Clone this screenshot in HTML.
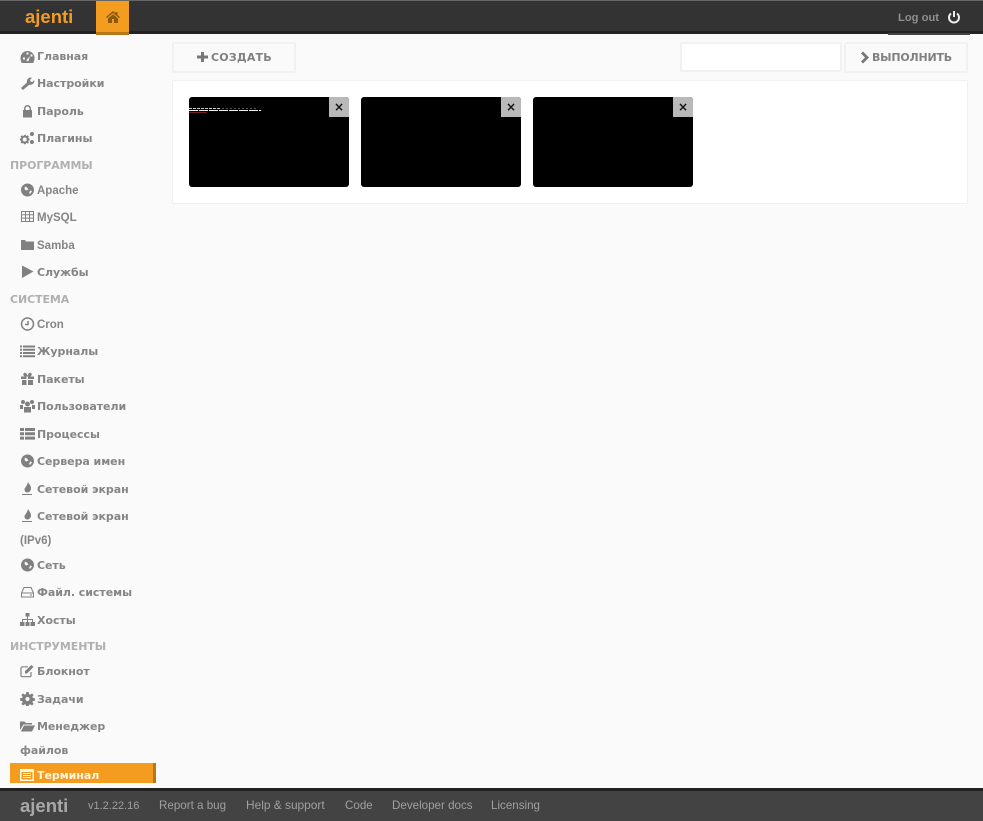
<!DOCTYPE html>
<html><head><meta charset="utf-8">
<style>
html,body{margin:0;padding:0;width:983px;height:821px;overflow:hidden;background:#fafafa;font-family:"DejaVu Sans",sans-serif}
.a{position:absolute;white-space:nowrap}
.t{position:absolute;left:37px;margin-top:1px;white-space:nowrap;font:bold 11px/14px "DejaVu Sans",sans-serif;color:#858585;letter-spacing:-.05px}
.l{position:absolute;left:37px;margin-top:1px;white-space:nowrap;font:bold 11.5px/14px "Liberation Sans",sans-serif;color:#858585}
.h{position:absolute;left:10px;margin-top:1px;white-space:nowrap;font:bold 11px/14px "DejaVu Sans",sans-serif;color:#b0b0b0;letter-spacing:-.1px}
svg.i{position:absolute;left:20px;width:15px;height:14px;fill:#808080}
.f{position:absolute;top:799px;white-space:nowrap;font:11.6px/14px "Liberation Sans",sans-serif;color:#a0a0a0}
.btn{position:absolute;background:#fafafa;border:2px solid #f1f1f1;box-sizing:border-box;border-radius:2px}
.term{position:absolute;top:97px;width:160px;height:90px;background:#000;border-radius:3px;overflow:hidden}
.x{position:absolute;right:0;top:0;width:20px;height:20px;background:#b9b9b9;color:#111;font:bold 12px/20px "DejaVu Sans",sans-serif;text-align:center}
</style></head><body>
<div class="a" style="left:0;top:0;width:983px;height:34px;background:#333;border-top:1px solid #666;border-bottom:3px solid #222;box-sizing:border-box"></div>
<div class="a" style="left:25px;top:6px;font:bold 18.5px/22px 'Liberation Sans',sans-serif;color:#f39c1f">ajenti</div>
<div class="a" style="left:96px;top:1px;width:33px;height:34px;background:#f39c1f;border-bottom:3px solid #b97716;box-sizing:border-box"></div>
<svg class="a" style="left:106px;top:11px" width="14" height="12" viewBox="0 0 14 12"><path fill="#8a5a10" d="M7 0 0 6l1 1 6-5 6 5 1-1-2.500-2V1h-2v1.300zM2 7.500V12h4V8h2v4h4V7.500L7 3.300z"/></svg>
<div class="a" style="left:888px;top:33px;width:82px;height:2px;background:#444"></div>
<div class="a" style="left:898px;top:11px;font:bold 11.2px/14px 'Liberation Sans',sans-serif;color:#8f8f8f">Log out</div>
<svg class="a" style="left:947px;top:10px" width="14" height="15" viewBox="0 0 14 15"><path fill="none" stroke="#eee" stroke-width="2" d="M4 3.500a5 5 0 1 0 6 0M7 1v6"/></svg>

<svg class="i" style="top:50px" viewBox="0 0 15 14"><path fill-rule="evenodd" d="M7.500 1a7 7 0 0 0-7 7c0 1.800.5 3.500 1.300 5h11.400c.8-1.500 1.300-3.200 1.300-5a7 7 0 0 0-7-7zM3 7.500h2v2H3zm3.500-5h2v2h-2zm4 2v2h2v-2zM6.500 10a1.200 1.200 0 0 0 2 1L10 6z"/></svg>
<div class="t" style="top:49px">Главная</div>
<svg class="i" style="top:76px" viewBox="0 0 15 14"><path d="M1 12 7 6.500C6.500 4 8 1.500 11 1.500l1 .2-2 2 .5 1.800 1.800.5 2-2c.4 3-2 5.300-5 4.700L3 14z"/></svg>
<div class="t" style="top:76px">Настройки</div>
<svg class="i" style="top:104px" viewBox="0 0 15 14"><path d="M3 6h1V4.500a3.500 3.500 0 0 1 7 0V6h1v7.500H3zm2.500 0h4V4.500a2 2 0 0 0-4 0z"/></svg>
<div class="t" style="top:104px">Пароль</div>
<svg class="i" style="top:131px" viewBox="0 0 15 14"><path d="M5.500 3.500 6.200 5l1.600-.6 1 1-.6 1.600 1.300.7v1.500L8.200 9.900l.6 1.600-1 1-1.600-.6-.7 1.300H4L3.300 11.900l-1.600.6-1-1 .6-1.600L0 9.200V7.700L1.300 7 .7 5.400l1-1 1.600.6L5 3.500z M4.700 6.500a2 2 0 1 0 .1 4 2 2 0 0 0-.1-4zM12 1a2 2 0 1 1-.1 4A2 2 0 0 1 12 1zm0 8a2 2 0 1 1-.1 4 2 2 0 0 1 .1-4z" fill-rule="evenodd"/></svg>
<div class="t" style="top:131px">Плагины</div>

<div class="h" style="top:158px">ПРОГРАММЫ</div>
<svg class="i" style="top:183px" viewBox="0 0 15 14"><path d="M7.500.5a6.500 6.500 0 1 0 0 13 6.500 6.500 0 0 0 0-13zM5 3.500l2 1 1.500 2-2.500 1-1.500-1.500zm5 4 2 .5-1.500 2.500-1.500 0z" fill-rule="evenodd"/></svg>
<div class="l" style="top:183px">Apache</div>
<svg class="i" style="top:210px" viewBox="0 0 15 14"><path fill="none" stroke="#808080" d="M1.500 1.500h12v10h-12zM1.500 4.800h12M1.500 8.100h12M5.500 1.500v10M9.500 1.500v10"/></svg>
<div class="l" style="top:210px">MySQL</div>
<svg class="i" style="top:238px" viewBox="0 0 15 14"><path d="M1 2h4l1 1.500h8V12H1z"/></svg>
<div class="l" style="top:238px">Samba</div>
<svg class="i" style="top:265px" viewBox="0 0 15 14"><path d="M2 0.500 13.500 6.500 2 13z"/></svg>
<div class="t" style="top:265px">Службы</div>

<div class="h" style="top:292px">СИСТЕМА</div>
<svg class="i" style="top:317px" viewBox="0 0 15 14"><path fill="none" stroke="#808080" stroke-width="1.500" d="M7.500 1a6 6 0 1 0 0 12 6 6 0 0 0 0-12zM8 4v3.500H5"/></svg>
<div class="l" style="top:317px">Cron</div>
<svg class="i" style="top:344px" viewBox="0 0 15 14"><path d="M0 1.500h2v2H0zm3 0h12v2H3zM0 4.800h2v2H0zm3 0h12v2H3zM0 8h2v2H0zm3 0h12v2H3zM0 11.200h2v2H0zm3 0h12v2H3z"/></svg>
<div class="t" style="top:344px">Журналы</div>
<svg class="i" style="top:372px" viewBox="0 0 15 14"><path d="M1 4.500h5.500V7H1zm7 0h6V7H8zM2 8h4.500v5H2zm6 0h5v5H8zM4 1c1.500-.8 3 .5 3.500 3 .5-2.500 2-3.800 3.500-3 1.500 1 .5 3-1 3.500H5C3.500 4 2.500 2 4 1z"/></svg>
<div class="t" style="top:372px">Пакеты</div>
<svg class="i" style="top:399px" viewBox="0 0 15 14"><path d="M3 1a2 2 0 1 1 0 4 2 2 0 0 1 0-4zm9 0a2 2 0 1 1 0 4 2 2 0 0 1 0-4zM7.500 2.500a2.500 2.500 0 1 1 0 5 2.500 2.500 0 0 1 0-5zM0 6h3v4H0zm12 0h3v4h-3zM4 8h7v5.500H4z"/></svg>
<div class="t" style="top:399px">Пользователи</div>
<svg class="i" style="top:427px" viewBox="0 0 15 14"><path d="M0 1h4v3H0zm5 0h10v3H5zM0 5.300h4v3H0zm5 0h10v3H5zM0 9.600h4v3H0zm5 0h10v3H5z"/></svg>
<div class="t" style="top:427px">Процессы</div>
<svg class="i" style="top:454px" viewBox="0 0 15 14"><path d="M7.500.5a6.500 6.500 0 1 0 0 13 6.500 6.500 0 0 0 0-13zM5 3.500l2 1 1.500 2-2.500 1-1.500-1.500zm5 4 2 .5-1.500 2.500-1.500 0z" fill-rule="evenodd"/></svg>
<div class="t" style="top:454px">Сервера имен</div>
<svg class="i" style="top:482px" viewBox="0 0 15 14"><path d="M8 0c1 2 3 3.500 3 6.500 0 2.500-2 4-3.500 4-2 0-3-1.500-3-3 0-2 2-2 3.500-7.500zM2 12h10v1H2z"/></svg>
<div class="t" style="top:482px">Сетевой экран</div>
<svg class="i" style="top:509px" viewBox="0 0 15 14"><path d="M8 0c1 2 3 3.500 3 6.500 0 2.500-2 4-3.500 4-2 0-3-1.500-3-3 0-2 2-2 3.500-7.500zM2 12h10v1H2z"/></svg>
<div class="t" style="top:509px">Сетевой экран</div>
<div class="l" style="top:533px;left:20px;font-size:11.5px">(IPv6)</div>
<svg class="i" style="top:558px" viewBox="0 0 15 14"><path d="M7.500.5a6.500 6.500 0 1 0 0 13 6.500 6.500 0 0 0 0-13zM5 3.500l2 1 1.500 2-2.500 1-1.500-1.500zm5 4 2 .5-1.500 2.500-1.500 0z" fill-rule="evenodd"/></svg>
<div class="t" style="top:558px">Сеть</div>
<svg class="i" style="top:585px" viewBox="0 0 15 14"><path fill="none" stroke="#808080" d="M1.500 8 4 2.500h7L13.500 8v4h-12zM1.500 8h12M10 10h2"/></svg>
<div class="t" style="top:585px">Файл. системы</div>
<svg class="i" style="top:613px" viewBox="0 0 15 14"><path d="M5.500 0h4v3.500h-4zM7 3.500h1V6h5v3h-1V7H8v2H7V7H3v2H2V6h5zM0 9h4.500v4H0zm5.500 0h4v4h-4zm5 0H15v4h-4.500z"/></svg>
<div class="t" style="top:613px">Хосты</div>

<div class="h" style="top:639px">ИНСТРУМЕНТЫ</div>
<svg class="i" style="top:664px" viewBox="0 0 15 14"><path fill="none" stroke="#808080" stroke-width="1.200" d="M11 8v3.500a1.200 1.200 0 0 1-1.200 1.200H2.200A1.200 1.200 0 0 1 1 11.500V4a1.200 1.200 0 0 1 1.200-1.200H8"/><path d="M5 7 11.500 1l2 2L7 9.500H5z"/></svg>
<div class="t" style="top:664px">Блокнот</div>
<svg class="i" style="top:692px" viewBox="0 0 15 14"><path fill-rule="evenodd" d="M6.300 0h2.400l.3 2 1.300.6 1.700-1.200 1.600 1.700L12.400 4.800l.5 1.200 2 .3v2.400l-2 .3-.5 1.200 1.200 1.700-1.600 1.600-1.700-1.200-1.300.6-.3 2H6.300L6 12.900l-1.300-.6L3 13.500l-1.600-1.600 1.200-1.700-.5-1.200-2-.3V6.300l2-.3.5-1.200-1.200-1.700L3 1.400l1.700 1.200L6 2zM7.500 5a2 2 0 1 0 0 4 2 2 0 0 0 0-4z"/></svg>
<div class="t" style="top:692px">Задачи</div>
<svg class="i" style="top:719px" viewBox="0 0 15 14"><path d="M0 11V2.500h4.500L6 4h6v1.500H3.500zM4 6.500h11L12 12.500H0.800z"/></svg>
<div class="t" style="top:719px">Менеджер</div>
<div class="t" style="top:743px;left:20px">файлов</div>

<div class="a" style="left:10px;top:763px;width:146px;height:20px;background:#f39c1f;border-right:3px solid #b97716;box-sizing:border-box"></div>
<svg class="i" style="top:768px;fill:#fff5e0" viewBox="0 0 15 14"><path fill-rule="evenodd" d="M0 1h14v12H0zM1.500 4v7.500h11V4zM3 5h8v1H3zm0 2h8v1H3zm0 2h8v1H3z"/></svg>
<div class="t" style="top:768px;color:#fff5e0">Терминал</div>

<div class="btn" style="left:172px;top:42px;width:124px;height:31px"></div>
<svg class="a" style="left:197px;top:51px" width="11" height="12" viewBox="0 0 11 12"><path fill="#777" d="M4 1h3v3.500h4v3H7V11H4V7.500H0v-3h4z"/></svg>
<div class="a" style="left:211px;top:50px;font:bold 11px/15px 'DejaVu Sans',sans-serif;color:#808080;letter-spacing:.2px">СОЗДАТЬ</div>
<div class="btn" style="left:680px;top:42px;width:162px;height:30px;background:#fff"></div>
<div class="btn" style="left:844px;top:42px;width:124px;height:31px"></div>
<svg class="a" style="left:860px;top:51px" width="10" height="13" viewBox="0 0 10 13"><path fill="#777" d="M1 2.500 3 .5 9 6.500 3 12.500 1 10.500 5 6.500z"/></svg>
<div class="a" style="left:872px;top:50px;font:bold 11px/15px 'DejaVu Sans',sans-serif;color:#808080;letter-spacing:-.2px">ВЫПОЛНИТЬ</div>

<div class="a" style="left:172px;top:80px;width:796px;height:124px;background:#fff;border:1px solid #f1f1f1;box-sizing:border-box;border-radius:2px"></div>
<div class="term" style="left:189px">
<div class="a" style="left:0;top:11px;width:31px;height:1px;background:repeating-linear-gradient(90deg,#ccc 0 3px,#000 3px 4px)"></div>
<div class="a" style="left:33px;top:11px;width:36px;height:1px;background:repeating-linear-gradient(90deg,#555 0 2px,#000 2px 4px)"></div>
<div class="a" style="left:0;top:13px;width:72px;height:1px;background:repeating-linear-gradient(90deg,#eee 0 9px,#000 9px 10px)"></div>
<div class="a" style="left:0;top:15px;width:18px;height:1px;background:#702020"></div>
<div class="x">×</div></div>
<div class="term" style="left:361px"><div class="x">×</div></div>
<div class="term" style="left:533px"><div class="x">×</div></div>

<div class="a" style="left:0;top:788px;width:983px;height:33px;background:#434343;border-top:3px solid #222;box-sizing:border-box"></div>
<div class="a" style="left:20px;top:795px;font:bold 18.5px/22px 'Liberation Sans',sans-serif;color:#a8a8a8">ajenti</div>
<div class="f" style="left:88px;font-size:11px">v1.2.22.16</div>
<div class="f" style="left:159px">Report a bug</div>
<div class="f" style="left:246px;top:798px;font-size:11.9px">Help &amp; support</div>
<div class="f" style="left:345px">Code</div>
<div class="f" style="left:392px">Developer docs</div>
<div class="f" style="left:491px">Licensing</div>
</body></html>
